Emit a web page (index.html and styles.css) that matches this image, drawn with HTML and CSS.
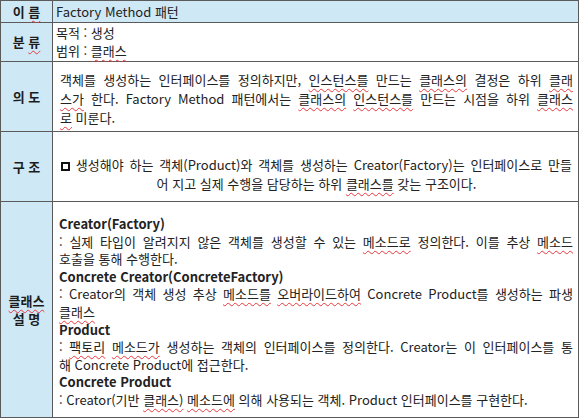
FILE: index.html
```html
<!DOCTYPE html>
<html lang="ko">
<head>
<meta charset="utf-8">
<link rel="stylesheet" href="styles.css">
</head>
<body>
<div class="sheet">
  <div class="label r1"><span>이 <span class="sp">름</span></span></div>
  <div class="cell name r1">Factory Method 패턴</div>

  <div class="label r2"><span>분 <span class="sp">류</span></span></div>
  <div class="cell kind r2">
    <div>목적 : 생성</div>
    <div>범위 : <span class="sp">클래스</span></div>
  </div>

  <div class="label r3"><span>의 도</span></div>
  <div class="cell intent r3">
    <span class="ln j">객체를 생성하는 인터페이스를 정의하지만, <span class="sp">인스턴스를</span> 만드는 <span class="sp">클래스의</span> 결정은 하위 <span class="sp">클래</span></span>
    <span class="ln j"><span class="sp">스가</span> 한다. Factory Method 패턴에서는 <span class="sp">클래스의</span> <span class="sp">인스턴스를</span> 만드는 시점을 하위 <span class="sp">클래스</span></span>
    <span class="ln"><span class="sp">로</span> 미룬다.</span>
  </div>

  <div class="label r4"><span>구 조</span></div>
  <div class="cell struct r4">
    <span class="ln j"><span class="box"></span> 생성해야 하는 객체(Product)와 객체를 생성하는 Creator(Factory)는 인터페이스로 만들</span>
    <span class="ln c">어 지고 실제 수행을 담당하는 하위 <span class="sp">클래스를</span> 갖는 구조이다.</span>
  </div>

  <div class="label r5"><span><span class="sp">클래스</span><br>설 명</span></div>
  <div class="cell desc r5">
    <span class="ln b">Creator(Factory)</span>
    <span class="ln j">: 실제 타입이 알려지지 않은 객체를 생성할 수 있는 <span class="sp">메소드로</span> 정의한다. 이를 추상 <span class="sp">메소드</span></span>
    <span class="ln">호출을 통해 수행한다.</span>
    <span class="ln b">Concrete Creator(ConcreteFactory)</span>
    <span class="ln j">: Creator의 객체 생성 추상 <span class="sp">메소드를</span> <span class="sp">오버라이드하여</span> Concrete Product를 생성하는 파생</span>
    <span class="ln"><span class="sp">클래스</span></span>
    <span class="ln b">Product</span>
    <span class="ln j">: <span class="sp">팩토리</span> <span class="sp">메소드가</span> 생성하는 객체의 인터페이스를 정의한다. Creator는 이 인터페이스를 통</span>
    <span class="ln">해 Concrete Product에 접근한다.</span>
    <span class="ln b">Concrete Product</span>
    <span class="ln">: Creator(기반 <span class="sp">클래스)</span> <span class="sp">메소드에</span> 의해 사용되는 객체. Product 인터페이스를 구현한다.</span>
  </div>
</div>
</body>
</html>
```

FILE: styles.css
```css
html, body {
  margin: 0;
  padding: 0;
  background: #ffffff;
}

body {
  font-family: "Noto Sans CJK KR", "Noto Sans", sans-serif;
  font-size: 13px;
  color: #222222;
}

.sheet {
  width: 579px;
  box-sizing: border-box;
  display: grid;
  grid-template-columns: 51px 1fr;
  grid-template-rows: 21px 38px 69px 69px 215px;
  gap: 1px;
  padding: 1px;
  background: #5a5a5a;
}

.label {
  background: #cfe8f6;
  font-weight: bold;
  display: flex;
  align-items: center;
  justify-content: center;
  text-align: center;
  line-height: 18px;
  color: #1c1c1c;
  white-space: nowrap;
}

.cell {
  background: #ffffff;
  box-sizing: border-box;
}

.name {
  background: #cfe8f6;
  padding: 0 3px;
  line-height: 21px;
}

.kind {
  padding: 1px 3px 0;
  line-height: 18px;
}

.intent {
  padding: 8px 5px 0 7px;
  line-height: 19px;
}

.struct {
  padding: 23px 6px 0 8px;
  line-height: 19px;
}

.desc {
  padding: 13px 5px 0 6px;
  line-height: 17.6px;
}

.ln {
  display: block;
  white-space: nowrap;
}

.ln.j {
  text-align: justify;
  text-align-last: justify;
  white-space: normal;
}

.ln.c {
  text-align: center;
}

.ln.b {
  font-weight: bold;
}

.sp {
  text-decoration: underline wavy #e8383d;
  text-decoration-thickness: 1px;
  text-underline-offset: 3px;
}

.box {
  display: inline-block;
  width: 9px;
  height: 9px;
  border: 2px solid #111111;
  box-sizing: border-box;
  vertical-align: -1px;
}
```
